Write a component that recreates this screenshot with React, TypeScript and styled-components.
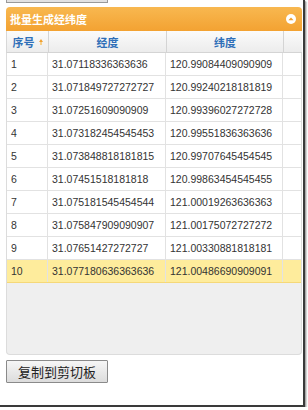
import styled, { createGlobalStyle, css } from 'styled-components';

type TRow = {
  attrSelected?: boolean;
};

const ROWS: [string, string, string][] = [
  ['1', '31.07118336363636', '120.99084409090909'],
  ['2', '31.071849727272727', '120.99240218181819'],
  ['3', '31.07251609090909', '120.99396027272728'],
  ['4', '31.073182454545453', '120.99551836363636'],
  ['5', '31.073848818181815', '120.99707645454545'],
  ['6', '31.07451518181818', '120.99863454545455'],
  ['7', '31.075181545454544', '121.00019263636363'],
  ['8', '31.075847909090907', '121.00175072727272'],
  ['9', '31.07651427272727', '121.00330881818181'],
  ['10', '31.077180636363636', '121.00486690909091'],
];

export default function App() {
  return (
    <>
      <GlobalStyle />
      <Frame>
        <TopStub />
        <Panel>
          <PanelHeader>
            <h1>批量生成经纬度</h1>
            <CollapseIcon>
              <svg width="10" height="10" viewBox="0 0 10 10">
                <circle cx="5" cy="5" r="5" fill="#fff" />
                <path d="M2.4 6.2 L5 3.4 L7.6 6.2 Z" fill="#f0a030" />
              </svg>
            </CollapseIcon>
          </PanelHeader>
          <GridHead>
            <HeadCell>
              序号
              <SortMark>
                <svg width="4" height="6" viewBox="0 0 4 6">
                  <path d="M0 3 L2 0 L4 3 Z" fill="#f0a030" />
                  <rect x="1.2" y="3" width="1.6" height="3" fill="#f7c874" />
                </svg>
              </SortMark>
            </HeadCell>
            <HeadCell>经度</HeadCell>
            <HeadCell>纬度</HeadCell>
            <HeadCell />
          </GridHead>
          <GridBody>
            {ROWS.map(([no, lat, lng]) => (
              <Row key={no} attrSelected={no === '10'}>
                <Cell>{no}</Cell>
                <Cell>{lat}</Cell>
                <Cell>{lng}</Cell>
              </Row>
            ))}
          </GridBody>
        </Panel>
        <CopyButton>复制到剪切板</CopyButton>
      </Frame>
    </>
  );
}

const GlobalStyle = createGlobalStyle`
  * {
    box-sizing: border-box;
  }
  body {
    margin: 0;
    background: #fff;
    font-family: "Liberation Sans", "Noto Sans CJK SC", sans-serif;
  }
`;

const Frame = styled.div`
  width: 305px;
  height: 407px;
  background: #fff;
  border-right: 2px solid #3a3a3a;
  border-bottom: 2px solid #3a3a3a;
  box-shadow: 1px 1px 1px rgba(0, 0, 0, 0.25), 2px 2px 1px rgba(0, 0, 0, 0.12);
  display: flex;
  flex-direction: column;
  align-items: flex-start;
`;

const TopStub = styled.div`
  width: 102px;
  height: 3px;
  margin-left: 6px;
  background: #e2e2e2;
  border: 1px solid #9a9a9a;
  border-top: none;
`;

const Panel = styled.div`
  width: 296px;
  margin: 4px 0 0 6px;
  display: flex;
  flex-direction: column;
`;

const PanelHeader = styled.div`
  display: flex;
  align-items: center;
  justify-content: space-between;
  height: 24px;
  padding: 0 6px 0 4px;
  border-radius: 4px 4px 0 0;
  background: linear-gradient(#f8b850, #f3a232);
  & > h1 {
    margin: 0;
    color: #fff;
    font-family: "Noto Sans CJK SC", sans-serif;
    font-size: 11px;
    font-weight: 700;
    line-height: 14px;
  }
`;

const CollapseIcon = styled.div`
  display: flex;
  width: 10px;
  height: 10px;
`;

const GridHead = styled.div`
  display: grid;
  grid-template-columns: 42px 118px 117px 19px;
  height: 22px;
  background: linear-gradient(#fbfbfb, #ececec);
  border-left: 1px solid #d8d8d8;
  border-bottom: 1px solid #d4d4d4;
`;

const HeadCell = styled.div`
  display: flex;
  align-items: center;
  justify-content: center;
  gap: 4px;
  border-right: 1px solid #d4d4d4;
  color: #2f6fb8;
  font-family: "Noto Sans CJK SC", sans-serif;
  font-size: 11px;
  font-weight: 700;
  &:last-child {
    border-right: none;
  }
`;

const SortMark = styled.span`
  display: flex;
`;

const GridBody = styled.div`
  height: 302px;
  background: #efefef;
  border: 1px solid #dcdcdc;
  border-top: none;
  border-radius: 0 0 4px 4px;
`;

const Row = styled.div<TRow>`
  display: grid;
  grid-template-columns: 41px 118px 117px;
  height: 23px;
  background: #fff;
  border-bottom: 1px solid #e2e2e2;
  ${props =>
    props.attrSelected &&
    css`
      background: #feec9c;
      border-bottom-color: #f5d879;
    `}
`;

const Cell = styled.div`
  display: flex;
  align-items: center;
  padding-left: 4px;
  border-right: 1px solid #e2e2e2;
  color: #333;
  font-size: 10.5px;
  white-space: nowrap;
  overflow: hidden;
`;

const CopyButton = styled.button`
  width: 102px;
  height: 23px;
  margin: 5px 0 0 6px;
  padding: 0;
  border: 1px solid #8a8a8a;
  border-radius: 1px;
  background: linear-gradient(#f6f6f6, #dcdcdc);
  color: #222;
  font-family: "Noto Sans CJK SC", sans-serif;
  font-size: 13px;
  line-height: 21px;
`;
